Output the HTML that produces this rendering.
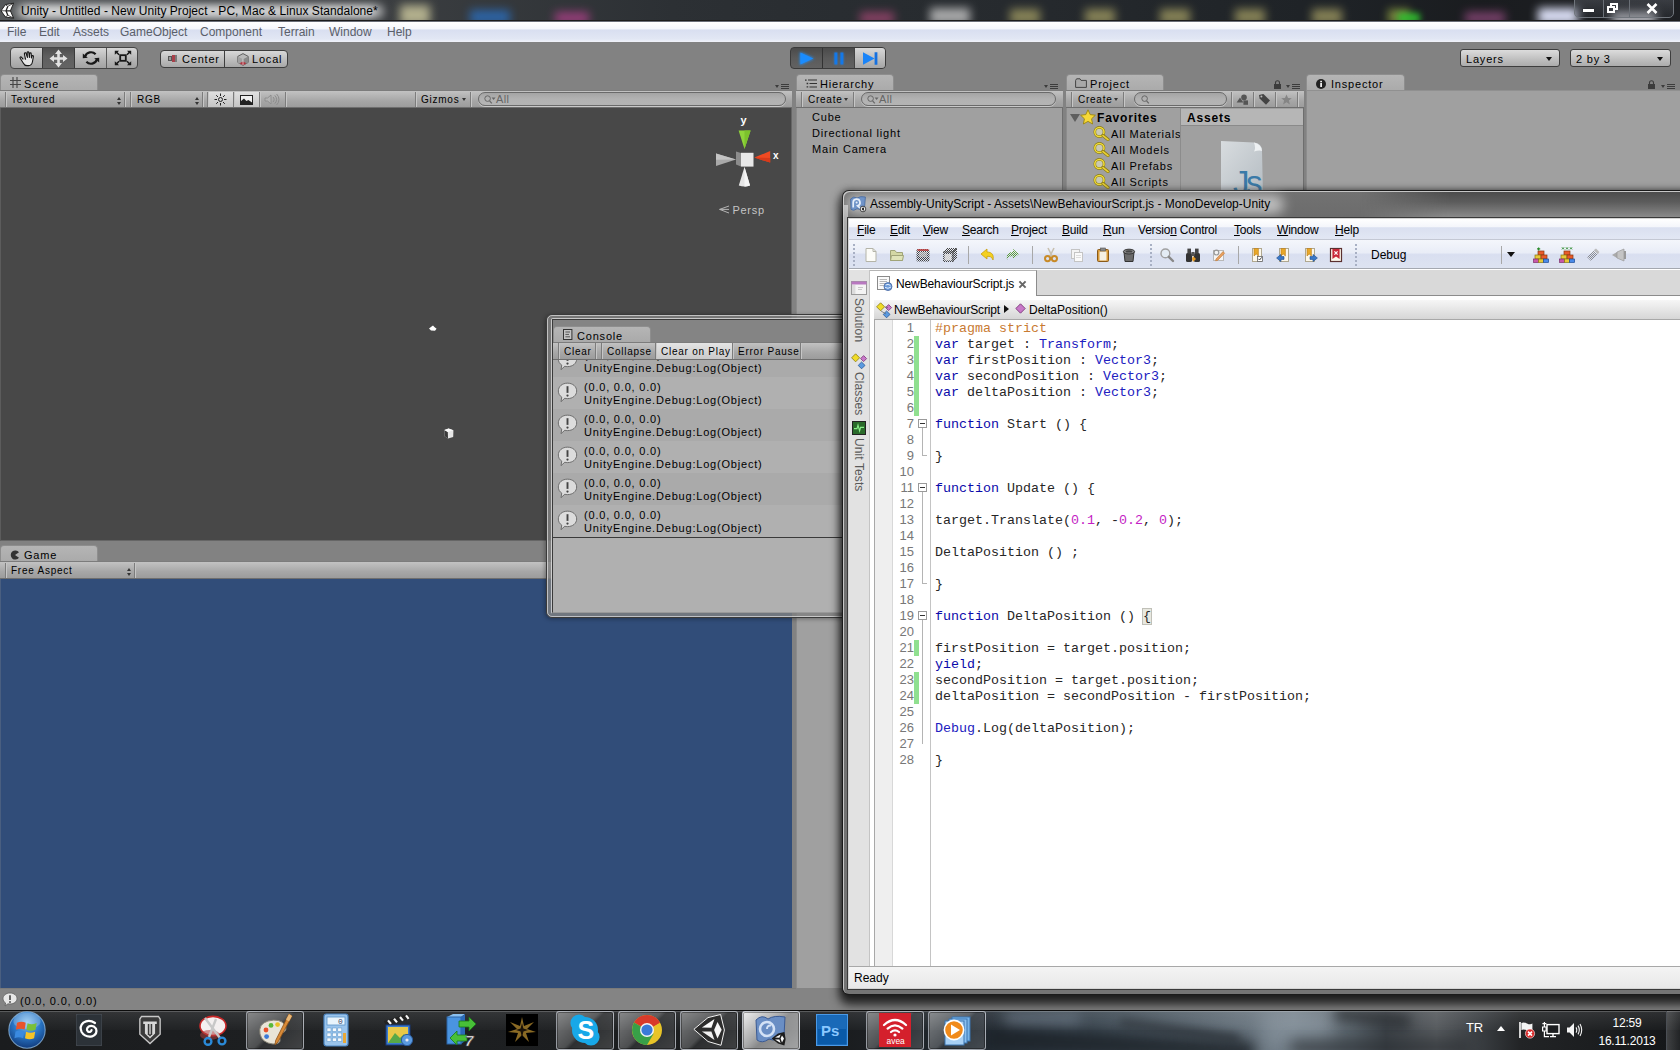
<!DOCTYPE html>
<html>
<head>
<meta charset="utf-8">
<title>Unity</title>
<style>
*{box-sizing:border-box;margin:0;padding:0}
html,body{width:1680px;height:1050px;overflow:hidden;background:#828282;font-family:"Liberation Sans",sans-serif}
#root{position:absolute;left:0;top:0;width:1680px;height:1050px;overflow:hidden;background:#828282}
.a{position:absolute}
.u{font:11px "Liberation Sans",sans-serif;letter-spacing:.8px;color:#000;white-space:pre;line-height:14px}
.ub{font:bold 12px "Liberation Sans",sans-serif;letter-spacing:.8px;color:#000;white-space:pre;line-height:14px}
.s{font:12px "Liberation Sans",sans-serif;color:#000;white-space:pre;line-height:14px}
.m{font:13.33px "Liberation Mono",monospace;color:#262626;white-space:pre;line-height:16px}
/* Unity title + menu */
#utitle{left:0;top:0;width:1680px;height:22px;background:#2b2d30;overflow:hidden}
#umenu{left:0;top:22px;width:1680px;height:20px;background:linear-gradient(#fff 0,#f5f7fc 34%,#d9dff0 40%,#e2e7f4 85%,#f0f2f9 100%)}
#umenu span{position:absolute;top:3px;color:#5a5f6a}
/* Unity panels */
.tab{background:linear-gradient(#b5b5b5,#a9a9a9);border:1px solid #8e8e8e;border-bottom:none;border-radius:4px 4px 0 0;height:17px}
.tbar{background:linear-gradient(#c2c2c2,#a7a7a7 60%,#9c9c9c);border-top:1px solid #8a8a8a;border-bottom:1px solid #6e6e6e;height:17px}
.pane{background:#a0a0a0}

.btn{background:linear-gradient(#d4d4d4,#b4b4b4 55%,#a4a4a4);border:1px solid #4a4a4a}
.btnon{background:linear-gradient(#555,#6a6a6a);border:1px solid #3c3c3c}
.sep{position:absolute;top:0;width:1px;height:15px;background:#7c7c7c;box-shadow:1px 0 0 #c6c6c6}
.t10{font:10px "Liberation Sans",sans-serif;letter-spacing:.75px;color:#000;white-space:pre;line-height:12px}
.ctx{position:absolute;width:14px;height:7px}

.ctxm{position:absolute;width:14px;height:6px}
.ctxm:before{content:"";position:absolute;left:0;top:1px;border:2.5px solid transparent;border-top:3.5px solid #3c3c3c}
.ctxm:after{content:"";position:absolute;left:6px;top:0;width:8px;height:1px;background:#3c3c3c;box-shadow:0 2px 0 #3c3c3c,0 4px 0 #3c3c3c}
.dd:after{content:"";position:absolute;right:3px;top:3px;border:2.5px solid transparent;border-bottom:3px solid #333}
.dd:before{content:"";position:absolute;right:3px;top:10px;border:2.5px solid transparent;border-top:3px solid #333}
.srch{position:absolute;height:14px;border-radius:7px;border:1px solid #6a6a6a;background:linear-gradient(#a4a4a4,#b2b2b2 50%,#b4b4b4);box-shadow:0 1px 0 #c8c8c8}

#mono .mi{position:absolute;top:4px;letter-spacing:-.2px}
#mono .mi u{text-decoration:underline}
.ln{position:absolute;left:893px;width:21px;text-align:right;font:13px "Liberation Sans",sans-serif;color:#777;line-height:16px;white-space:pre}
.kw{color:#0a0aaa}.ty{color:#2020c0}.pp{color:#c87a32}.nm{color:#c41ec4}
.fold{position:absolute;left:918px;width:9px;height:9px;border:1px solid #9a9a9a;background:#fff}
.fold:after{content:"";position:absolute;left:1px;top:3px;width:5px;height:1px;background:#333}
.gb{position:absolute;left:914px;width:5px;background:#90e090}
.ti{position:absolute;top:247px}

.tbtn{position:absolute;top:1px;width:58px;height:39px;border-radius:3px;border:1px solid rgba(210,215,225,.6);background:linear-gradient(135deg,rgba(255,255,255,.42) 0,rgba(255,255,255,.22) 46%,rgba(255,255,255,.08) 52%,rgba(255,255,255,.16) 100%);box-shadow:inset 0 0 0 1px rgba(0,0,0,.35)}
.tico{position:absolute;top:4px}
.tb2>*{margin-top:1px}
.tbar{border-top-color:#7c7c7c}
.tab.sh>*{margin-top:1px}
</style>
</head>
<body>
<div id="root">

<!-- ===== Unity title bar ===== -->
<div id="utitle" class="a">
<div class="a" style="left:0;top:0;width:1680px;height:22px;background:linear-gradient(90deg,#55585a 0,#4a4d50 4%,#3a3d40 24%,#2c3034 40%,#262a2e 60%,#1e2226 80%,#1a1c1f 88%,#1e2024 100%)"></div>
<!-- blurry wallpaper blobs -->
<div class="a" style="left:400px;top:5px;width:30px;height:20px;background:#d0cca0;filter:blur(5px);opacity:.8"></div>
<div class="a" style="left:470px;top:10px;width:40px;height:14px;background:#2a6fc0;filter:blur(5px);opacity:.8"></div>
<div class="a" style="left:555px;top:12px;width:34px;height:12px;background:#b0408a;filter:blur(5px);opacity:.8"></div>
<div class="a" style="left:860px;top:12px;width:34px;height:12px;background:#b04a7a;filter:blur(5px);opacity:.7"></div>
<div class="a" style="left:930px;top:8px;width:40px;height:16px;background:#c8c8c8;filter:blur(5px);opacity:.8"></div>
<div class="a" style="left:1010px;top:9px;width:30px;height:15px;background:#a09a62;filter:blur(5px);opacity:.8"></div>
<div class="a" style="left:1085px;top:9px;width:30px;height:15px;background:#a09a62;filter:blur(5px);opacity:.8"></div>
<div class="a" style="left:1160px;top:9px;width:30px;height:15px;background:#a09a62;filter:blur(5px);opacity:.8"></div>
<div class="a" style="left:1235px;top:9px;width:30px;height:15px;background:#a09a62;filter:blur(5px);opacity:.8"></div>
<div class="a" style="left:1312px;top:9px;width:30px;height:15px;background:#a09a62;filter:blur(5px);opacity:.8"></div>
<div class="a" style="left:1388px;top:9px;width:22px;height:15px;background:#8a9a42;filter:blur(4px);opacity:.8"></div>
<div class="a" style="left:1398px;top:13px;width:22px;height:10px;background:#2fc02f;filter:blur(3px);opacity:.9"></div>
<div class="a" style="left:1465px;top:12px;width:40px;height:12px;background:#a0508a;filter:blur(5px);opacity:.7"></div>
<div class="a" style="left:1538px;top:8px;width:40px;height:16px;background:#e4e8ff;filter:blur(5px);opacity:.95"></div>
<div class="a" style="left:1612px;top:12px;width:44px;height:12px;background:#e8e8f0;filter:blur(5px);opacity:.8"></div>
<!-- white glow behind title -->
<div class="a" style="left:16px;top:4px;width:368px;height:15px;background:#fff;filter:blur(4px);opacity:.55;border-radius:8px"></div>
<div class="a" style="left:24px;top:6px;width:350px;height:11px;background:#fff;filter:blur(3px);opacity:.45;border-radius:6px"></div>
<!-- unity logo -->
<svg class="a" style="left:0px;top:2px" width="17" height="17" viewBox="0 0 17 17"><path d="M1 8.8 L5.4 2.6 L13.6 1.2 L10.4 8.8 L13.6 16.2 L5.4 15 Z" fill="#fff" stroke="#222" stroke-width="1"/><path d="M6 8.8 L10.4 8.8 M6 8.8 L7.8 4.4 M6 8.8 L7.8 13.2" stroke="#222" stroke-width="1.3" fill="none"/><path d="M5.4 2.6 L7.8 4.4 L13.6 1.2 M5.4 15 L7.8 13.2 L13.6 16.2 M1 8.8 H6" stroke="#222" stroke-width=".8" fill="none"/></svg>
<div class="a s" style="left:21px;top:4px;letter-spacing:.05px">Unity - Untitled - New Unity Project - PC, Mac &amp; Linux Standalone*</div>
<!-- caption buttons -->
<div class="a" style="left:1574px;top:-4px;width:100px;height:22px;border:1px solid #70757c;border-radius:0 0 5px 5px;background:linear-gradient(rgba(120,125,135,.35),rgba(60,65,72,.25))"></div>
<div class="a" style="left:1603px;top:0;width:1px;height:17px;background:#6a6f76"></div>
<div class="a" style="left:1629px;top:0;width:1px;height:17px;background:#6a6f76"></div>
<div class="a" style="left:1583px;top:9px;width:11px;height:3px;background:#fff;box-shadow:0 0 1px #000"></div>
<div class="a" style="left:1610px;top:3px;width:8px;height:7px;border:2px solid #fff;border-top-width:2px"></div>
<div class="a" style="left:1607px;top:6px;width:8px;height:7px;border:2px solid #fff;background:#3a3d42"></div>
<svg class="a" style="left:1646px;top:3px" width="12" height="11" viewBox="0 0 12 11"><path d="M1.5 1 L10.5 10 M10.5 1 L1.5 10" stroke="#fff" stroke-width="2.6"/></svg>
<div class="a" style="left:0;top:20px;width:1680px;height:1px;background:#1c1c1c"></div>
<div class="a" style="left:0;top:21px;width:1680px;height:1px;background:#6a6e78"></div>
</div>

<!-- ===== Unity menu ===== -->
<div id="umenu" class="a s"><span style="left:7px">File</span><span style="left:39px">Edit</span><span style="left:73px">Assets</span><span style="left:120px">GameObject</span><span style="left:200px">Component</span><span style="left:278px">Terrain</span><span style="left:329px">Window</span><span style="left:387px">Help</span></div>

<!-- ===== Unity toolbar ===== -->
<div id="utool" class="a" style="left:0;top:42px;width:1680px;height:33px">
<!-- transform tools -->
<div class="a" style="left:10px;top:5px;width:128px;height:22px;border-radius:4px;border:1px solid #454545;background:linear-gradient(#d6d6d6,#b6b6b6 55%,#a2a2a2);overflow:hidden">
 <div class="a" style="left:31px;top:0;width:33px;height:20px;background:linear-gradient(#4e4e4e,#5e5e5e 40%,#646464);border-left:1px solid #3a3a3a;border-right:1px solid #3a3a3a"></div>
 <div class="a" style="left:95px;top:0;width:1px;height:20px;background:#5a5a5a"></div>
 <!-- hand -->
 <svg class="a" style="left:7px;top:2px" width="18" height="17" viewBox="0 0 18 17"><path d="M5.2 9.4 L3.4 7.2 C2.6 6.4 1.6 7.3 2.2 8.2 L5.4 13.2 C6 14.6 7.4 15.6 9 15.6 L10.6 15.6 C12.8 15.6 14 14 14.4 12 L15.4 6.6 C15.6 5.4 14 5.2 13.8 6.4 L13.4 8 L13.2 3.8 C13.2 2.6 11.6 2.6 11.6 3.8 L11.4 7.4 L10.8 2.6 C10.6 1.4 9 1.6 9.2 2.8 L9.4 7.4 L8 3.4 C7.6 2.2 6.2 2.8 6.4 4 L7.6 9.6" fill="#e6e6e6" stroke="#151515" stroke-width="1.1" stroke-linejoin="round"/></svg>
 <!-- move -->
 <svg class="a" style="left:38px;top:1px" width="19" height="19" viewBox="0 0 19 19"><path d="M9.5 0.5 L13 5 L10.8 5 L10.8 8.2 L14 8.2 L14 6 L18.5 9.5 L14 13 L14 10.8 L10.8 10.8 L10.8 14 L13 14 L9.5 18.5 L6 14 L8.2 14 L8.2 10.8 L5 10.8 L5 13 L0.5 9.5 L5 6 L5 8.2 L8.2 8.2 L8.2 5 L6 5 Z" fill="#e2e2e2"/></svg>
 <!-- rotate -->
 <svg class="a" style="left:71px;top:2px" width="18" height="16" viewBox="0 0 18 16"><path d="M3.2 6.4 A6 5.4 0 0 1 13.6 4.2" fill="none" stroke="#181818" stroke-width="2.2"/><path d="M14.8 9.6 A6 5.4 0 0 1 4.4 11.8" fill="none" stroke="#181818" stroke-width="2.2"/><path d="M0.8 3.4 L5.8 7.8 L0.8 8.2 Z M17.2 12.6 L12.2 8.2 L17.2 7.8 Z" fill="#181818"/></svg>
 <!-- scale -->
 <svg class="a" style="left:103px;top:2px" width="18" height="16" viewBox="0 0 18 16"><rect x="6.2" y="5.2" width="5.6" height="5.6" fill="none" stroke="#181818" stroke-width="1.8"/><path d="M0.8 0.8 L5 0.8 L3.6 2.2 L5.6 4.2 L4.6 5.2 L2.4 3.2 L0.8 4.8 Z M17.2 0.8 L13 0.8 L14.4 2.2 L12.4 4.2 L13.4 5.2 L15.6 3.2 L17.2 4.8 Z M0.8 15.2 L5 15.2 L3.6 13.8 L5.6 11.8 L4.6 10.8 L2.4 12.8 L0.8 11.2 Z M17.2 15.2 L13 15.2 L14.4 13.8 L12.4 11.8 L13.4 10.8 L15.6 12.8 L17.2 11.2 Z" fill="#181818"/></svg>
</div>
<!-- center / local -->
<div class="a" style="left:160px;top:8px;width:128px;height:18px;border-radius:4px;border:1px solid #3e3e3e;background:linear-gradient(#d8d8d8,#bdbdbd 55%,#a8a8a8)">
 <div class="a" style="left:63px;top:0;width:1px;height:16px;background:#3e3e3e"></div>
 <div class="a" style="left:7px;top:5px;width:4px;height:5px;border:1px solid #555;background:#9a9a9a"></div>
 <div class="a" style="left:11px;top:4px;width:3px;height:7px;background:#a8404a"></div>
 <div class="a" style="left:14px;top:4px;width:2px;height:7px;background:#7a7a7a"></div>
 <div class="a u" style="left:21px;top:1px">Center</div>
 <svg class="a" style="left:76px;top:2px" width="12" height="13" viewBox="0 0 12 13"><path d="M6 0.6 L11.2 3.4 L11.2 9.4 L6 12.4 L0.8 9.4 L0.8 3.4 Z" fill="#b9b9b9" stroke="#555" stroke-width=".9"/><path d="M6 6.2 L11.2 3.4 L11.2 9.4 L6 12.4 Z" fill="#8a8a8a"/><path d="M6 6.2 L0.8 3.4 L0.8 9.4 L6 12.4 Z" fill="#a0a0a0"/><path d="M6 8.4 L9.4 10.2 L6 12.2 L2.6 10.2 Z" fill="#b0303c"/><path d="M6 6.2 L6 12" stroke="#eee" stroke-width=".7"/></svg>
 <div class="a u" style="left:91px;top:1px">Local</div>
</div>
<!-- play buttons -->
<div class="a" style="left:790px;top:5px;width:96px;height:22px;border-radius:4px;border:1px solid #3a3a3a;background:linear-gradient(#4a4a4a,#5a5a5a 50%,#626262);overflow:hidden">
 <div class="a" style="left:31px;top:0;width:1px;height:20px;background:#333"></div>
 <div class="a" style="left:63px;top:0;width:32px;height:20px;background:linear-gradient(#d8d8d8,#bcbcbc 55%,#a6a6a6);border-left:1px solid #444"></div>
 <svg class="a" style="left:6px;top:2px" width="20" height="17" viewBox="0 0 20 17"><defs><filter id="gl" x="-50%" y="-50%" width="200%" height="200%"><feGaussianBlur stdDeviation="1.6"/></filter></defs><path d="M3 2 L17 8.5 L3 15 Z" fill="#1e90ff" filter="url(#gl)"/><path d="M3.4 2.4 L16.4 8.5 L3.4 14.6 Z" fill="#1a8cff"/></svg>
 <svg class="a" style="left:38px;top:2px" width="20" height="17" viewBox="0 0 20 17"><path d="M5.6 2.4 H8 V14.6 H5.6 Z M11.8 2.4 H14.2 V14.6 H11.8 Z" fill="#1e90ff" opacity=".6" filter="url(#gl)"/><path d="M5.4 2.4 H8.4 V14.6 H5.4 Z M11.4 2.4 H14.4 V14.6 H11.4 Z" fill="#1478e8"/></svg>
 <svg class="a" style="left:69px;top:2px" width="22" height="17" viewBox="0 0 22 17"><path d="M3 2.2 L14.6 8.5 L3 14.8 Z" fill="#1a84f8"/><path d="M14.6 2.2 H17.4 V14.8 H14.6 Z" fill="#1470e0"/></svg>
</div>
<!-- layers / layout -->
<div class="a" style="left:1460px;top:7px;width:100px;height:18px;border-radius:3px;border:1px solid #3e3e3e;background:linear-gradient(#dcdcdc,#bebebe 60%,#acacac)"><div class="a u" style="left:5px;top:2px">Layers</div><div class="a" style="left:85px;top:7px;border:3px solid transparent;border-top:4px solid #111;width:0;height:0"></div></div>
<div class="a" style="left:1570px;top:7px;width:101px;height:18px;border-radius:3px;border:1px solid #3e3e3e;background:linear-gradient(#dcdcdc,#bebebe 60%,#acacac)"><div class="a u" style="left:5px;top:2px">2 by 3</div><div class="a" style="left:86px;top:7px;border:3px solid transparent;border-top:4px solid #111;width:0;height:0"></div></div>
</div>

<!-- ===== Scene ===== -->
<div id="scene" class="a" style="left:0;top:75px;width:796px;height:471px">
<div class="a tab sh" style="left:0;top:-1px;height:18px;padding-top:1px;width:98px"><svg class="a" style="left:9px;top:1px" width="11" height="11" viewBox="0 0 11 11"><path d="M3 0 V11 M7 0 V11 M0 3.5 H11 M0 7.5 H11" stroke="#444" stroke-width="1.1"/></svg><div class="a u" style="left:23px;top:1px">Scene</div></div>
<div class="ctxm" style="left:775px;top:9px"></div>
<div class="a tbar tb2" style="left:0;top:15px;height:18px;width:792px">
 <div class="sep" style="left:5px"></div>
 <div class="a t10 dd" style="left:7px;top:0;width:117px;height:15px;padding:2px 0 0 4px">Textured</div>
 <div class="sep" style="left:124px"></div><div class="sep" style="left:130px"></div>
 <div class="a t10 dd" style="left:132px;top:0;width:70px;height:15px;padding:2px 0 0 5px">RGB</div>
 <div class="sep" style="left:202px"></div>
 <div class="a" style="left:208px;top:0;width:52px;height:15px;background:linear-gradient(#e0e0e0,#c4c4c4)"></div>
 <div class="sep" style="left:207px"></div><div class="sep" style="left:233px"></div><div class="sep" style="left:259px"></div><div class="sep" style="left:285px"></div>
 <svg class="a" style="left:214px;top:1px" width="13" height="13" viewBox="0 0 13 13"><circle cx="6.5" cy="6.5" r="2" fill="none" stroke="#222" stroke-width="1"/><path d="M6.5 0.5 V3 M6.5 10 V12.5 M0.5 6.5 H3 M10 6.5 H12.5 M2.2 2.2 L4 4 M9 9 L10.8 10.8 M2.2 10.8 L4 9 M9 4 L10.8 2.2" stroke="#222" stroke-width="1"/></svg>
 <svg class="a" style="left:240px;top:3px" width="13" height="10" viewBox="0 0 13 10"><rect x=".5" y=".5" width="12" height="9" fill="#f0f0f0" stroke="#222"/><path d="M1 9 L1 6 L4 3.4 L6.4 6 L8.4 5 L12 7.6 L12 9 Z" fill="#222"/></svg>
 <svg class="a" style="left:264px;top:1px" width="16" height="13" viewBox="0 0 16 13"><path d="M1 5 H3.6 L7 2 V11 L3.6 8 H1 Z" fill="#b4b4b4" stroke="#8c8c8c" stroke-width=".9"/><path d="M9 4 A3.4 3.4 0 0 1 9 9 M10.8 2.4 A5.6 5.6 0 0 1 10.8 10.6 M12.6 1 A7.6 7.6 0 0 1 12.6 12" fill="none" stroke="#8c8c8c" stroke-width="1"/></svg>
 <div class="sep" style="left:415px"></div>
 <div class="a t10" style="left:421px;top:2px">Gizmos</div>
 <div class="a" style="left:462px;top:6px;border:2.5px solid transparent;border-top:3px solid #333"></div>
 <div class="sep" style="left:470px"></div>
 <div class="srch" style="left:478px;top:0;width:308px"><svg class="a" style="left:5px;top:2px" width="12" height="9" viewBox="0 0 12 9"><circle cx="3.6" cy="3.6" r="2.8" fill="none" stroke="#666" stroke-width="1"/><path d="M5.6 5.8 L7.8 8.4" stroke="#666" stroke-width="1.2"/><path d="M7.6 2.6 H11.6 L9.6 5 Z" fill="#666"/></svg><div class="a t10" style="left:17px;top:0;color:#666;font-size:11px;letter-spacing:.3px">All</div></div>
</div>
<div class="a" style="left:0;top:33px;width:792px;height:433px;background:#484848;border-left:1px solid #5c5c5c;border-right:1px solid #666;border-bottom:1px solid #666"></div>
<!-- scene objects -->
<svg class="a" style="left:428px;top:250px" width="10" height="7" viewBox="0 0 10 7"><path d="M1 3.4 L3.6 1.6 L5 0.6 L6.4 2 L8.6 3.8 L7 5.8 L3 5.6 Z" fill="#fff"/></svg>
<svg class="a" style="left:444px;top:353px" width="10" height="11" viewBox="0 0 10 11"><path d="M0.4 2 L4.6 0.4 L9.4 2.2 L9.2 9 L4 10.6 L0.6 8.2 Z" fill="#e6e6e6"/><path d="M0.4 2 L3.8 4 L4 10.6 L0.6 8.2 Z" fill="#3a3a3a"/><path d="M0.4 2 L4.6 0.4 L9.4 2.2 L3.8 4 Z" fill="#fafafa"/></svg>
<!-- gizmo -->
<svg class="a" style="left:712px;top:40px" width="72" height="104" viewBox="0 0 72 104">
 <text x="28.5" y="9.4" font-family="Liberation Sans" font-weight="bold" font-size="11" fill="#fff">y</text>
 <path d="M26.6 15.5 L38.6 15.5 L32.5 34 Z" fill="#8fd43a"/><path d="M32.5 15.5 L38.6 15.5 L32.5 34 Z" fill="#7cc22c"/>
 <path d="M4 38.6 L24 44.4 L4 51 Z" fill="#a8a8a8"/><path d="M4 38.6 L24 44.4 L4 44.8 Z" fill="#c4c4c4"/>
 <path d="M58.2 36 L42.4 42.6 L58.2 47.6 Z" fill="#f04a22"/><path d="M58.2 43 L42.4 42.6 L58.2 47.6 Z" fill="#d83a1a"/>
 <path d="M24 36.6 L29 38 L29 51.6 L24 49.6 Z" fill="#8c8c8c"/><rect x="29" y="37.8" width="12.5" height="13.8" fill="#e8e8e8"/>
 <path d="M32.5 52 L38 70.6 Q32.5 72.6 26.8 70.6 Z" fill="#e6e6e6"/><path d="M32.5 52 L38 70.6 Q35 71.6 32.5 71.8 Z" fill="#f6f6f6"/>
 <text x="61" y="44" font-family="Liberation Sans" font-weight="bold" font-size="10" fill="#fff">x</text>
 <path d="M17 91 L7.6 94.4 L17 98 M17 94.4 L7.6 94.4" fill="none" stroke="#b4b4b4" stroke-width="1"/>
 <text x="20.5" y="98.6" font-family="Liberation Sans" font-size="11" letter-spacing=".7" fill="#c4c4c4">Persp</text>
</svg>
</div>

<!-- ===== Game ===== -->
<div id="game" class="a" style="left:0;top:546px;width:796px;height:444px">
<div class="a tab sh" style="left:0;top:-1px;height:18px;padding-top:1px;width:98px"><svg class="a" style="left:9px;top:3px" width="10" height="10" viewBox="0 0 10 10"><path d="M5 5 L9 2.2 A4.6 4.6 0 1 0 9 7.8 Z" fill="#333"/></svg><div class="a u" style="left:23px;top:1px">Game</div></div>
<div class="a tbar tb2" style="left:0;top:15px;height:18px;width:792px">
 <div class="sep" style="left:5px"></div>
 <div class="a t10 dd" style="left:7px;top:0;width:127px;height:15px;padding:2px 0 0 4px">Free Aspect</div>
 <div class="sep" style="left:134px"></div>
</div>
<div class="a" style="left:0;top:33px;width:792px;height:409px;background:#314d79;border-left:1px solid #4a5f80"></div>
</div>

<!-- ===== Hierarchy ===== -->
<div id="hier" class="a" style="left:796px;top:75px;width:267px;height:915px">
<div class="a tab sh" style="left:0;top:-1px;height:18px;padding-top:1px;width:98px"><svg class="a" style="left:8px;top:3px" width="12" height="9" viewBox="0 0 12 9"><path d="M3 1 H12 M4.5 4.5 H12 M4.5 8 H12" stroke="#333" stroke-width="1.1"/><path d="M0 0.4 H1.6 V1.8 H0 Z M1.6 3.8 H3.2 V5.2 H1.6 Z M1.6 7.2 H3.2 V8.6 H1.6 Z" fill="#333"/></svg><div class="a u" style="left:23px;top:1px">Hierarchy</div></div>
<div class="ctxm" style="left:248px;top:9px"></div>
<div class="a pane" style="left:0;top:16px;width:267px;height:897px;border-left:1px solid #8c8c8c;border-right:1px solid #6e6e6e"></div>
<div class="a tbar tb2" style="left:0;top:15px;height:18px;width:267px">
 <div class="sep" style="left:5px"></div>
 <div class="a t10" style="left:12px;top:2px">Create</div>
 <div class="a" style="left:48px;top:6px;border:2.5px solid transparent;border-top:3px solid #333"></div>
 <div class="sep" style="left:57px"></div>
 <div class="srch" style="left:65px;top:0;width:195px"><svg class="a" style="left:5px;top:2px" width="12" height="9" viewBox="0 0 12 9"><circle cx="3.6" cy="3.6" r="2.8" fill="none" stroke="#666" stroke-width="1"/><path d="M5.6 5.8 L7.8 8.4" stroke="#666" stroke-width="1.2"/><path d="M7.6 2.6 H11.6 L9.6 5 Z" fill="#666"/></svg><div class="a t10" style="left:17px;top:0;color:#666;font-size:11px;letter-spacing:.3px">All</div></div>
</div>
<div class="a u" style="left:16px;top:34px;line-height:16px">Cube
Directional light
Main Camera</div>
</div>

<!-- ===== Project ===== -->
<div id="proj" class="a" style="left:1066px;top:75px;width:238px;height:915px">
<div class="a tab sh" style="left:0;top:-1px;height:18px;padding-top:1px;width:98px"><svg class="a" style="left:8px;top:2px" width="12" height="10" viewBox="0 0 12 10"><path d="M0.6 2.4 L1.6 0.8 H5 L6 2.4 H11.4 V9.4 H0.6 Z" fill="#a8a8a8" stroke="#444" stroke-width="1"/></svg><div class="a u" style="left:23px;top:1px">Project</div></div>
<svg class="a" style="left:207px;top:4px" width="9" height="11" viewBox="0 0 9 11"><path d="M2.5 5.4 V3.8 A2 2 0 0 1 6.5 3.8 V5.4" fill="none" stroke="#3c3c3c" stroke-width="1.1"/><rect x="1" y="5" width="7" height="5" fill="#3c3c3c"/></svg>
<div class="ctxm" style="left:220px;top:9px"></div>
<div class="a pane" style="left:0;top:16px;width:238px;height:897px;border-left:1px solid #8c8c8c;border-right:1px solid #6e6e6e"></div>
<div class="a tbar tb2" style="left:0;top:15px;height:18px;width:238px">
 <div class="sep" style="left:5px"></div>
 <div class="a t10" style="left:12px;top:2px">Create</div>
 <div class="a" style="left:48px;top:6px;border:2.5px solid transparent;border-top:3px solid #333"></div>
 <div class="sep" style="left:57px"></div>
 <div class="srch" style="left:68px;top:0;width:93px"><svg class="a" style="left:6px;top:2px" width="9" height="9" viewBox="0 0 9 9"><circle cx="3.6" cy="3.6" r="2.8" fill="none" stroke="#666" stroke-width="1"/><path d="M5.6 5.8 L7.8 8.4" stroke="#666" stroke-width="1.2"/></svg></div>
 <div class="sep" style="left:165px"></div><div class="sep" style="left:187px"></div><div class="sep" style="left:209px"></div><div class="sep" style="left:231px"></div>
 <svg class="a" style="left:170px;top:2px" width="13" height="11" viewBox="0 0 13 11"><circle cx="8" cy="3.4" r="2.8" fill="#555"/><path d="M0.6 8.6 L4 3.6 L7.4 8.6 Z" fill="#555"/><rect x="7.4" y="6.4" width="4.6" height="4.4" fill="#555"/></svg>
 <svg class="a" style="left:192px;top:1px" width="13" height="13" viewBox="0 0 13 13"><path d="M1 2 L5.4 1 L12 7.6 L8 11.8 L1.6 5.6 Z" fill="#444"/><circle cx="3.4" cy="3.4" r="1" fill="#bbb"/></svg>
 <svg class="a" style="left:215px;top:2px" width="11" height="11" viewBox="0 0 11 11"><path d="M5.5 0.4 L7 4 L10.8 4.2 L7.9 6.6 L8.9 10.4 L5.5 8.2 L2.1 10.4 L3.1 6.6 L0.2 4.2 L4 4 Z" fill="#858585"/></svg>
</div>
<!-- tree -->
<div class="a" style="left:114px;top:33px;width:1px;height:882px;background:#8c8c8c"></div>
<div class="a" style="left:115px;top:34px;width:122px;height:17px;background:#b6b6b6;border-bottom:1px solid #8a8a8a"></div>
<div class="a" style="left:4px;top:39px;border:5px solid transparent;border-top:8px solid #5e5e5e;border-bottom:0"></div>
<svg class="a" style="left:14px;top:34px" width="16" height="16" viewBox="0 0 16 16"><path d="M8 0.8 L10.2 5.6 L15.4 6.2 L11.6 9.8 L12.6 15 L8 12.4 L3.4 15 L4.4 9.8 L0.6 6.2 L5.8 5.6 Z" fill="#f6d838" stroke="#9a8410" stroke-width=".9"/></svg>
<div class="a ub" style="left:31px;top:36px">Favorites</div>
<div class="a ub" style="left:121px;top:36px">Assets</div>
<svg class="a" style="left:27px;top:51px" width="17" height="15" viewBox="0 0 17 15"><circle cx="6.4" cy="6" r="4.6" fill="#c9c9b4" stroke="#8a7a10" stroke-width="2.6"/><circle cx="6.4" cy="6" r="4.6" fill="none" stroke="#f0dc3c" stroke-width="1.5"/><path d="M10 9.6 L15 13.6" stroke="#8a7a10" stroke-width="3.2" stroke-linecap="round"/><path d="M10 9.6 L15 13.6" stroke="#e8d038" stroke-width="1.8" stroke-linecap="round"/></svg><svg class="a" style="left:27px;top:67px" width="17" height="15" viewBox="0 0 17 15"><circle cx="6.4" cy="6" r="4.6" fill="#c9c9b4" stroke="#8a7a10" stroke-width="2.6"/><circle cx="6.4" cy="6" r="4.6" fill="none" stroke="#f0dc3c" stroke-width="1.5"/><path d="M10 9.6 L15 13.6" stroke="#8a7a10" stroke-width="3.2" stroke-linecap="round"/><path d="M10 9.6 L15 13.6" stroke="#e8d038" stroke-width="1.8" stroke-linecap="round"/></svg><svg class="a" style="left:27px;top:83px" width="17" height="15" viewBox="0 0 17 15"><circle cx="6.4" cy="6" r="4.6" fill="#c9c9b4" stroke="#8a7a10" stroke-width="2.6"/><circle cx="6.4" cy="6" r="4.6" fill="none" stroke="#f0dc3c" stroke-width="1.5"/><path d="M10 9.6 L15 13.6" stroke="#8a7a10" stroke-width="3.2" stroke-linecap="round"/><path d="M10 9.6 L15 13.6" stroke="#e8d038" stroke-width="1.8" stroke-linecap="round"/></svg><svg class="a" style="left:27px;top:99px" width="17" height="15" viewBox="0 0 17 15"><circle cx="6.4" cy="6" r="4.6" fill="#c9c9b4" stroke="#8a7a10" stroke-width="2.6"/><circle cx="6.4" cy="6" r="4.6" fill="none" stroke="#f0dc3c" stroke-width="1.5"/><path d="M10 9.6 L15 13.6" stroke="#8a7a10" stroke-width="3.2" stroke-linecap="round"/><path d="M10 9.6 L15 13.6" stroke="#e8d038" stroke-width="1.8" stroke-linecap="round"/></svg>
<div class="a u" style="left:45px;top:51px;line-height:16px;width:69px;overflow:hidden">All Materials
All Models
All Prefabs
All Scripts</div>
<!-- js file icon -->
<svg class="a" style="left:154px;top:64px" width="46" height="56" viewBox="0 0 46 56"><defs><linearGradient id="pg" x1="0" y1="0" x2="1" y2="1"><stop offset="0" stop-color="#d8dcdf"/><stop offset="1" stop-color="#b4bcc2"/></linearGradient></defs><path d="M1 2 L34 3.4 Q42 4 42 12 L43 56 L1 56 Z" fill="url(#pg)"/><path d="M34 3.4 Q36 9 34 12.6 Q39 11 42 12 Q41.6 5 34 3.4 Z" fill="#eef1f3"/><text x="13" y="55" font-family="Liberation Sans" font-size="33" fill="#3a7aa8" letter-spacing="-3.5">Js</text></svg>
</div>

<!-- ===== Inspector ===== -->
<div id="insp" class="a" style="left:1306px;top:75px;width:374px;height:915px">
<div class="a tab sh" style="left:0;top:-1px;height:18px;padding-top:1px;width:99px"><svg class="a" style="left:9px;top:3px" width="10" height="10" viewBox="0 0 10 10"><circle cx="5" cy="5" r="5" fill="#222"/><rect x="4.2" y="4" width="1.8" height="4" fill="#eee"/><rect x="4.2" y="1.8" width="1.8" height="1.5" fill="#eee"/></svg><div class="a u" style="left:24px;top:1px">Inspector</div></div>
<svg class="a" style="left:341px;top:4px" width="9" height="11" viewBox="0 0 9 11"><path d="M2.5 5.4 V3.8 A2 2 0 0 1 6.5 3.8 V5.4" fill="none" stroke="#3c3c3c" stroke-width="1.1"/><rect x="1" y="5" width="7" height="5" fill="#3c3c3c"/></svg>
<div class="ctxm" style="left:355px;top:9px"></div>
<div class="a pane" style="left:0;top:15px;width:374px;height:898px;border-left:1px solid #8c8c8c;border-top:1px solid #909090"></div>
</div>

<!-- ===== Unity status ===== -->
<div id="ustatus" class="a" style="left:0;top:988px;width:1680px;height:22px;background:#848484">
<div class="a" style="left:0;top:0;width:796px;height:1px;background:#7a7a7a"></div>
<svg class="a" style="left:2px;top:4px" width="16" height="15" viewBox="0 0 16 15"><path d="M8 1 C12 1 15 3.4 15 6.6 C15 9.8 12 12 8 12 C7.2 12 6.6 12 6 11.8 L3 14 L3.6 11 C1.8 10 1 8.4 1 6.6 C1 3.4 4 1 8 1 Z" fill="#e8e8e8" stroke="#666" stroke-width=".9"/><path d="M8 3.2 V8" stroke="#555" stroke-width="1.8"/><circle cx="8" cy="10" r="1" fill="#555"/></svg>
<div class="a u" style="left:20px;top:6px">(0.0, 0.0, 0.0)</div>
</div>

<!-- ===== Console window ===== -->
<div id="console" class="a" style="left:546px;top:314px;width:311px;height:304px;border:1px solid #3a3a3a;border-radius:6px 0 0 6px;background:rgba(128,128,128,.82);box-shadow:-1px 1px 4px rgba(0,0,0,.35)">
<div class="a" style="left:0;top:0;width:311px;height:302px;border:1px solid rgba(255,255,255,.55);border-radius:5px 0 0 5px"></div>
<div class="a" style="left:4px;top:3px;width:310px;height:296px;border:1px solid rgba(255,255,255,.6);border-bottom-color:transparent;border-radius:2px"></div>
<div class="a" style="left:5px;top:4px;width:310px;height:294px;border:1px solid #3a3a3a;border-bottom-color:#9a9a9a;background:#848484"></div>
<div class="a" style="left:6px;top:5px;width:300px;height:292px;overflow:hidden">
 <div class="a tab" style="left:0;top:6px;width:98px;height:17px"><svg class="a" style="left:9px;top:2px" width="10" height="11" viewBox="0 0 10 11"><rect x=".5" y=".5" width="8.4" height="10" fill="#c4c4c4" stroke="#333"/><path d="M2.4 3 H7 M2.4 5.4 H6 M2.4 7.8 H7" stroke="#555" stroke-width="1"/></svg><div class="a u" style="left:23px;top:2px">Console</div></div>
 <div class="a tbar" style="left:0;top:22px;width:300px;height:18px">
  <div class="a" style="left:102px;top:0;width:78px;height:16px;background:linear-gradient(#e4e4e4,#cacaca)"></div>
  <div class="sep" style="left:5px;height:16px"></div><div class="sep" style="left:42px;height:16px"></div><div class="sep" style="left:48px;height:16px"></div><div class="sep" style="left:102px;height:16px"></div><div class="sep" style="left:179px;height:16px"></div><div class="sep" style="left:247px;height:16px"></div>
  <div class="a t10" style="left:11px;top:3px">Clear</div>
  <div class="a t10" style="left:54px;top:3px">Collapse</div>
  <div class="a t10" style="left:108px;top:3px">Clear on Play</div>
  <div class="a t10" style="left:185px;top:3px">Error Pause</div>
 </div>
 <div class="a" style="left:0;top:40px;width:300px;height:177px;overflow:hidden;background:#aaaaaa">
<div class="a" style="left:0;top:-15px;width:300px;height:32px;background:#aaaaaa"><svg class="a" style="left:4px;top:5px" width="21" height="21" viewBox="0 0 22 22"><path d="M11 1.2 C16.6 1.2 20.6 4.8 20.6 9.4 C20.6 14 16.6 17.4 11 17.4 C10 17.4 9 17.3 8.2 17 L4.2 20.6 L5 15.8 C2.6 14.4 1.4 12 1.4 9.4 C1.4 4.8 5.4 1.2 11 1.2 Z" fill="#dcdcdc" stroke="#6a6a6a" stroke-width="1"/><path d="M11 4.4 V11.4" stroke="#444" stroke-width="2"/><circle cx="11" cy="14.2" r="1.2" fill="#444"/></svg><div class="a u" style="left:31px;top:4px;line-height:13px">(0.0, 0.0, 0.0)
UnityEngine.Debug:Log(Object)</div></div>
<div class="a" style="left:0;top:17px;width:300px;height:32px;background:#b0b0b0"><svg class="a" style="left:4px;top:5px" width="21" height="21" viewBox="0 0 22 22"><path d="M11 1.2 C16.6 1.2 20.6 4.8 20.6 9.4 C20.6 14 16.6 17.4 11 17.4 C10 17.4 9 17.3 8.2 17 L4.2 20.6 L5 15.8 C2.6 14.4 1.4 12 1.4 9.4 C1.4 4.8 5.4 1.2 11 1.2 Z" fill="#dcdcdc" stroke="#6a6a6a" stroke-width="1"/><path d="M11 4.4 V11.4" stroke="#444" stroke-width="2"/><circle cx="11" cy="14.2" r="1.2" fill="#444"/></svg><div class="a u" style="left:31px;top:4px;line-height:13px">(0.0, 0.0, 0.0)
UnityEngine.Debug:Log(Object)</div></div>
<div class="a" style="left:0;top:49px;width:300px;height:32px;background:#aaaaaa"><svg class="a" style="left:4px;top:5px" width="21" height="21" viewBox="0 0 22 22"><path d="M11 1.2 C16.6 1.2 20.6 4.8 20.6 9.4 C20.6 14 16.6 17.4 11 17.4 C10 17.4 9 17.3 8.2 17 L4.2 20.6 L5 15.8 C2.6 14.4 1.4 12 1.4 9.4 C1.4 4.8 5.4 1.2 11 1.2 Z" fill="#dcdcdc" stroke="#6a6a6a" stroke-width="1"/><path d="M11 4.4 V11.4" stroke="#444" stroke-width="2"/><circle cx="11" cy="14.2" r="1.2" fill="#444"/></svg><div class="a u" style="left:31px;top:4px;line-height:13px">(0.0, 0.0, 0.0)
UnityEngine.Debug:Log(Object)</div></div>
<div class="a" style="left:0;top:81px;width:300px;height:32px;background:#b0b0b0"><svg class="a" style="left:4px;top:5px" width="21" height="21" viewBox="0 0 22 22"><path d="M11 1.2 C16.6 1.2 20.6 4.8 20.6 9.4 C20.6 14 16.6 17.4 11 17.4 C10 17.4 9 17.3 8.2 17 L4.2 20.6 L5 15.8 C2.6 14.4 1.4 12 1.4 9.4 C1.4 4.8 5.4 1.2 11 1.2 Z" fill="#dcdcdc" stroke="#6a6a6a" stroke-width="1"/><path d="M11 4.4 V11.4" stroke="#444" stroke-width="2"/><circle cx="11" cy="14.2" r="1.2" fill="#444"/></svg><div class="a u" style="left:31px;top:4px;line-height:13px">(0.0, 0.0, 0.0)
UnityEngine.Debug:Log(Object)</div></div>
<div class="a" style="left:0;top:113px;width:300px;height:32px;background:#aaaaaa"><svg class="a" style="left:4px;top:5px" width="21" height="21" viewBox="0 0 22 22"><path d="M11 1.2 C16.6 1.2 20.6 4.8 20.6 9.4 C20.6 14 16.6 17.4 11 17.4 C10 17.4 9 17.3 8.2 17 L4.2 20.6 L5 15.8 C2.6 14.4 1.4 12 1.4 9.4 C1.4 4.8 5.4 1.2 11 1.2 Z" fill="#dcdcdc" stroke="#6a6a6a" stroke-width="1"/><path d="M11 4.4 V11.4" stroke="#444" stroke-width="2"/><circle cx="11" cy="14.2" r="1.2" fill="#444"/></svg><div class="a u" style="left:31px;top:4px;line-height:13px">(0.0, 0.0, 0.0)
UnityEngine.Debug:Log(Object)</div></div>
<div class="a" style="left:0;top:145px;width:300px;height:32px;background:#b0b0b0"><svg class="a" style="left:4px;top:5px" width="21" height="21" viewBox="0 0 22 22"><path d="M11 1.2 C16.6 1.2 20.6 4.8 20.6 9.4 C20.6 14 16.6 17.4 11 17.4 C10 17.4 9 17.3 8.2 17 L4.2 20.6 L5 15.8 C2.6 14.4 1.4 12 1.4 9.4 C1.4 4.8 5.4 1.2 11 1.2 Z" fill="#dcdcdc" stroke="#6a6a6a" stroke-width="1"/><path d="M11 4.4 V11.4" stroke="#444" stroke-width="2"/><circle cx="11" cy="14.2" r="1.2" fill="#444"/></svg><div class="a u" style="left:31px;top:4px;line-height:13px">(0.0, 0.0, 0.0)
UnityEngine.Debug:Log(Object)</div></div>
 </div>
 <div class="a" style="left:0;top:217px;width:300px;height:1px;background:#3a3a3a"></div>
 <div class="a" style="left:0;top:218px;width:300px;height:75px;background:#b0b0b0"></div>
</div>
</div>

<!-- ===== MonoDevelop ===== -->
<div id="mono" class="a" style="left:0;top:0;width:1680px;height:1050px;pointer-events:none">
<!-- shadow + frame -->
<div class="a" style="left:842px;top:190px;width:860px;height:805px;border-radius:7px;background:#1a1a1a;box-shadow:0 0 7px 0 rgba(0,0,0,.5),0 7px 10px 3px rgba(0,0,0,.7)"></div>
<div class="a" style="left:843px;top:191px;width:860px;height:803px;border-radius:6px;background:linear-gradient(#727272 0,#6c6c6c 26px,#707070 28px,#747474 100%);box-shadow:inset 1px 1px 0 rgba(255,255,255,.6)"></div>
<div class="a" style="left:1360px;top:192px;width:330px;height:25px;background:linear-gradient(#4c4c4c,#5c5c5c 40%,#8a8a8a);-webkit-mask-image:linear-gradient(90deg,transparent,#000 90px);mask-image:linear-gradient(90deg,transparent,#000 90px)"></div>
<div class="a" style="left:844px;top:205px;width:4px;height:160px;background:linear-gradient(#b4b4b4,#a0a0a0 50px,rgba(112,112,112,0))"></div>
<!-- title glow + text -->
<div class="a" style="left:846px;top:195px;width:438px;height:19px;border-radius:10px;background:#fff;filter:blur(6px);opacity:.55"></div>
<svg class="a" style="left:849px;top:195px" width="18" height="18" viewBox="0 0 18 18"><path d="M1.6 4 Q4.6 0.6 8 3 Q11.6 0.8 16.4 2 L15.6 12 Q11.6 15.6 8 13.8 Q4.6 16.4 2 14.4 Z" fill="#6f93c8" stroke="#46689c" stroke-width=".8"/><path d="M4.2 12.6 V7.6 A3.4 3.4 0 1 1 8.6 10.8 L11.6 13.4" fill="none" stroke="#e6eefa" stroke-width="1.7"/><circle cx="7.6" cy="7.4" r="1" fill="#e6eefa"/><circle cx="14" cy="14" r="2.8" fill="#fafafa" stroke="#222" stroke-width=".8"/><path d="M12.6 14 L13.8 12.6 L15.4 12.8 L14.8 14 L15.4 15.4 L13.8 15.4 Z" fill="#222"/></svg>
<div class="a s" style="left:870px;top:197px">Assembly-UnityScript - Assets\NewBehaviourScript.js - MonoDevelop-Unity</div>
<!-- client -->
<div class="a" style="left:847px;top:217px;width:840px;height:773px;background:#3a3a3a"></div><div class="a" style="left:848px;top:218px;width:840px;height:771px;background:#d4d4d4"></div>
<div class="a" style="left:849px;top:219px;width:840px;height:769px;background:#fff"></div>
<!-- menu -->
<div class="a s" style="left:849px;top:219px;width:840px;height:21px;background:linear-gradient(#fff 0,#f4f6fb 38%,#dae0f0 44%,#e2e7f4 100%);border-bottom:1px solid #c4c8d4">
<span class="mi" style="left:8px"><u>F</u>ile</span><span class="mi" style="left:41px"><u>E</u>dit</span><span class="mi" style="left:74px"><u>V</u>iew</span><span class="mi" style="left:113px"><u>S</u>earch</span><span class="mi" style="left:162px"><u>P</u>roject</span><span class="mi" style="left:213px"><u>B</u>uild</span><span class="mi" style="left:254px"><u>R</u>un</span><span class="mi" style="left:289px">Versio<u>n</u> Control</span><span class="mi" style="left:385px"><u>T</u>ools</span><span class="mi" style="left:428px"><u>W</u>indow</span><span class="mi" style="left:486px"><u>H</u>elp</span>
</div>
<!-- toolbar -->
<div class="a" style="left:849px;top:240px;width:840px;height:29px;background:linear-gradient(#f4f6fb 0,#e9edf7 45%,#d9dff0 52%,#dde3f1 100%);border-bottom:1px solid #a4a8b0"></div>
<div class="a" style="left:853px;top:244px;width:2px;height:22px;background:repeating-linear-gradient(#a8b0c4 0,#a8b0c4 2px,transparent 2px,transparent 4px)"></div><div class="a" style="left:1150px;top:244px;width:2px;height:22px;background:repeating-linear-gradient(#a8b0c4 0,#a8b0c4 2px,transparent 2px,transparent 4px)"></div><div class="a" style="left:1355px;top:244px;width:2px;height:22px;background:repeating-linear-gradient(#a8b0c4 0,#a8b0c4 2px,transparent 2px,transparent 4px)"></div><div class="a" style="left:968px;top:246px;width:1px;height:18px;background:#a8a8a8"></div><div class="a" style="left:1032px;top:246px;width:1px;height:18px;background:#a8a8a8"></div><div class="a" style="left:1238px;top:246px;width:1px;height:18px;background:#a8a8a8"></div><div class="a" style="left:1501px;top:246px;width:1px;height:18px;background:#a8a8a8"></div><svg class="ti" style="left:863px" width="16" height="16" viewBox="0 0 16 16"><defs><pattern id="ht" width="2" height="2" patternUnits="userSpaceOnUse"><rect width="1" height="1" fill="#444"/><rect x="1" y="1" width="1" height="1" fill="#444"/></pattern><pattern id="htg" width="2" height="2" patternUnits="userSpaceOnUse"><rect width="1" height="1" fill="#5a9a3a"/><rect x="1" y="1" width="1" height="1" fill="#5a9a3a"/></pattern></defs><path d="M3 1.5 H10 L13 4.5 V14.5 H3 Z" fill="#fcfcf8" stroke="#b4b4a8"/><path d="M10 1.5 V4.5 H13" fill="none" stroke="#b4b4a8"/></svg><svg class="ti" style="left:889px" width="16" height="16" viewBox="0 0 16 16"><path d="M1.5 3.5 H6 L7.5 5.5 H13.5 V13.5 H1.5 Z" fill="#d4d8a4" stroke="#a0a478"/><path d="M2.5 8.5 H14.5 L13.5 13.5 H1.5 Z" fill="#e0e4b8" stroke="#a0a478"/></svg><svg class="ti" style="left:915px" width="16" height="16" viewBox="0 0 16 16"><rect x="1.5" y="2" width="13" height="12.5" rx="1.5" fill="url(#ht)"/><rect x="2.5" y="2" width="11" height="2" fill="#c04040" opacity=".8"/><rect x="4" y="5" width="8" height="5" fill="#ccc" opacity=".6"/></svg><svg class="ti" style="left:942px" width="16" height="16" viewBox="0 0 16 16"><path d="M1 5 L5 1 H15 V11 L11 15 H1 Z" fill="url(#ht)"/><path d="M1 5 H11 V15 M11 5 L15 1" stroke="#555" stroke-width=".8" fill="none"/><rect x="2.6" y="7" width="7" height="6.4" fill="#e4e4e4" opacity=".85"/></svg><svg class="ti" style="left:979px" width="16" height="16" viewBox="0 0 16 16"><path d="M2 7 L8 2 V5 C13 5 15 8 14 13 C13 10 11 9 8 9.4 V12 Z" fill="#f4d020" stroke="#c8a010" stroke-width=".8"/></svg><svg class="ti" style="left:1005px" width="16" height="16" viewBox="0 0 16 16"><path d="M14 7 L8 2 V5 C3 5 1 8 2 13 C3 10 5 9 8 9.4 V12 Z" fill="url(#htg)"/></svg><svg class="ti" style="left:1043px" width="16" height="16" viewBox="0 0 16 16"><path d="M5 1 L9 9 M11 1 L7 9" stroke="#c8c0b0" stroke-width="1.6"/><circle cx="4.6" cy="11.6" r="2.6" fill="none" stroke="#c88a28" stroke-width="2"/><circle cx="11.4" cy="11.6" r="2.6" fill="none" stroke="#c88a28" stroke-width="2"/></svg><svg class="ti" style="left:1069px" width="16" height="16" viewBox="0 0 16 16"><rect x="2.5" y="2.5" width="8" height="9" fill="#f4f4f4" stroke="#c4c4c4"/><rect x="5.5" y="5.5" width="8" height="9" fill="#fafafa" stroke="#c4c4c4"/><path d="M7 8.5 H12 M7 10.5 H12" stroke="#ddd"/></svg><svg class="ti" style="left:1095px" width="16" height="16" viewBox="0 0 16 16"><rect x="2.5" y="2.5" width="11" height="12" rx="1" fill="#d89a38" stroke="#8a5a18"/><rect x="4.5" y="4.5" width="7" height="9" fill="#f4f0e4"/><rect x="5.5" y="1" width="5" height="3" fill="#888" stroke="#555" stroke-width=".6"/></svg><svg class="ti" style="left:1121px" width="16" height="16" viewBox="0 0 16 16"><path d="M3 5 H13 L12 14.5 H4 Z" fill="#6a6a6a" stroke="#333"/><ellipse cx="8" cy="4.6" rx="5.6" ry="2.4" fill="#8a8a8a" stroke="#333"/><ellipse cx="8" cy="4.4" rx="3.4" ry="1.2" fill="#444"/></svg><svg class="ti" style="left:1159px" width="16" height="16" viewBox="0 0 16 16"><circle cx="6.4" cy="6.4" r="4.4" fill="#e4ecf4" stroke="#a0a0a0" stroke-width="1.4"/><path d="M9.8 9.8 L14 14" stroke="#888" stroke-width="2.4" stroke-linecap="round"/></svg><svg class="ti" style="left:1185px" width="16" height="16" viewBox="0 0 16 16"><rect x="1" y="6" width="6" height="9" rx="1.5" fill="#333"/><rect x="9" y="6" width="6" height="9" rx="1.5" fill="#333"/><rect x="2.4" y="1.6" width="3.6" height="5" fill="#444"/><rect x="10" y="1.6" width="3.6" height="5" fill="#444"/><rect x="6.4" y="5" width="3.2" height="4" fill="#555"/><path d="M8 9 L11 12 L8 15 L7 12 Z" fill="#e89a20"/></svg><svg class="ti" style="left:1211px" width="16" height="16" viewBox="0 0 16 16"><rect x="2.5" y="3.5" width="10" height="10" fill="#f4f4f4" stroke="#b8b8b8"/><path d="M5 12 L12 4.6 L13.6 6.2 L6.6 13.4 L4.6 13.8 Z" fill="#e8a060" stroke="#c07838" stroke-width=".6"/><circle cx="5.4" cy="5.6" r="2.4" fill="none" stroke="#999" stroke-width="1.2"/></svg><svg class="ti" style="left:1249px" width="16" height="16" viewBox="0 0 16 16"><rect x="3.5" y="1.5" width="9" height="13" fill="#fcf8ec" stroke="#b0a890"/><path d="M5 1.5 H9.4 V9 L7.2 7 L5 9 Z" fill="#e8a828" stroke="#b87818" stroke-width=".6"/><rect x="8.4" y="9.4" width="5" height="5" fill="#fff" stroke="#666" stroke-width=".8"/><path d="M9.4 11.8 L10.6 13 L12.6 10.4" fill="none" stroke="#333" stroke-width=".9"/></svg><svg class="ti" style="left:1276px" width="16" height="16" viewBox="0 0 16 16"><rect x="3.5" y="1.5" width="9" height="13" fill="#fcf8ec" stroke="#b0a890"/><path d="M5 1.5 H9.4 V9 L7.2 7 L5 9 Z" fill="#e8a828" stroke="#b87818" stroke-width=".6"/><path d="M0.6 11 L5 7.4 V9.6 H8 V12.4 H5 V14.6 Z" fill="#3a78c8" stroke="#1a4888" stroke-width=".6"/></svg><svg class="ti" style="left:1302px" width="16" height="16" viewBox="0 0 16 16"><rect x="3.5" y="1.5" width="9" height="13" fill="#fcf8ec" stroke="#b0a890"/><path d="M5 1.5 H9.4 V9 L7.2 7 L5 9 Z" fill="#e8a828" stroke="#b87818" stroke-width=".6"/><path d="M15.4 11 L11 7.4 V9.6 H8 V12.4 H11 V14.6 Z" fill="#3a78c8" stroke="#1a4888" stroke-width=".6"/></svg><svg class="ti" style="left:1328px" width="16" height="16" viewBox="0 0 16 16"><rect x="2.5" y="1.5" width="11" height="13" fill="#fcf8ec" stroke="#5a3030" stroke-width="1.2"/><path d="M4.4 2 H11.6 V12 L8 9.4 L4.4 12 Z" fill="#c82838"/><path d="M6.4 4.4 L9.6 7.6 M9.6 4.4 L6.4 7.6" stroke="#fff" stroke-width="1.2"/></svg><svg class="ti" style="left:1533px" width="16" height="16" viewBox="0 0 16 16"><rect x="5" y="4" width="6" height="4" fill="#e85a2a" stroke="#8a3a10" stroke-width=".7"/><rect x="2" y="8" width="6" height="4" fill="#e8c83a" stroke="#8a7a10" stroke-width=".7"/><rect x="8" y="8" width="6" height="4" fill="#e85a2a" stroke="#8a3a10" stroke-width=".7"/><rect x="0.6" y="12" width="5" height="3.4" fill="#c858a8" stroke="#7a2a68" stroke-width=".7"/><rect x="5.6" y="12" width="5" height="3.4" fill="#e8c83a" stroke="#8a7a10" stroke-width=".7"/><rect x="10.6" y="12" width="5" height="3.4" fill="#4a8ae8" stroke="#1a4a98" stroke-width=".7"/><path d="M5.6 0.4 V3.4 M4 1.8 H7.2" stroke="#2a8a2a" stroke-width="1.2"/></svg><svg class="ti" style="left:1559px" width="16" height="16" viewBox="0 0 16 16"><rect x="5" y="4" width="6" height="4" fill="#e85a2a" stroke="#8a3a10" stroke-width=".7"/><rect x="2" y="8" width="6" height="4" fill="#e8c83a" stroke="#8a7a10" stroke-width=".7"/><rect x="8" y="8" width="6" height="4" fill="#e85a2a" stroke="#8a3a10" stroke-width=".7"/><rect x="0.6" y="12" width="5" height="3.4" fill="#c858a8" stroke="#7a2a68" stroke-width=".7"/><rect x="5.6" y="12" width="5" height="3.4" fill="#e8c83a" stroke="#8a7a10" stroke-width=".7"/><rect x="10.6" y="12" width="5" height="3.4" fill="#4a8ae8" stroke="#1a4a98" stroke-width=".7"/><path d="M3 0.4 L5 2.4 M5 0.4 L3 2.4 M7 0.4 L9 2.4 M9 0.4 L7 2.4 M11 0.4 L13 2.4 M13 0.4 L11 2.4" stroke="#2a8a2a" stroke-width="1"/></svg><svg class="ti" style="left:1585px" width="16" height="16" viewBox="0 0 16 16"><path d="M2 10 L9 3 L13 7 L6 14 Z" fill="url(#ht)" opacity=".55"/><path d="M9 3 L11 1.6 L14.4 5 L13 7 Z" fill="#bbb"/></svg><svg class="ti" style="left:1611px" width="16" height="16" viewBox="0 0 16 16"><path d="M1 8 L6 5 V11 Z" fill="#aaa"/><path d="M6 5 L13 2 V14 L6 11 Z" fill="#c4c4c4" stroke="#999" stroke-width=".7"/><rect x="13" y="4" width="2" height="8" fill="#999"/></svg>
<div class="a s" style="left:1371px;top:248px">Debug</div>
<div class="a" style="left:1507px;top:252px;border:4px solid transparent;border-top:5px solid #111;border-bottom:0"></div>
<!-- dock strip -->
<div class="a" style="left:849px;top:270px;width:21px;height:696px;background:#e2e2e2;border-right:1px solid #c4c4c4"></div>
<!-- tab strip -->
<div class="a" style="left:870px;top:270px;width:820px;height:26px;background:#d9d9d9;border-bottom:1px solid #8c8c8c"></div>
<div class="a" style="left:870px;top:270px;width:167px;height:30px;background:#fff;border-right:1px solid #8c8c8c;border-top:1px solid #b4b4b4"></div>
<div class="a" style="left:870px;top:296px;width:820px;height:4px;background:#fff"></div>
<svg class="a" style="left:876px;top:275px" width="17" height="16" viewBox="0 0 17 16"><rect x="1.5" y="1.5" width="12" height="13" fill="#fafafa" stroke="#8a8a8a"/><path d="M3.6 4.5 H11 M3.6 6.5 H11 M3.6 8.5 H9 M3.6 10.5 H8" stroke="#b8b8b8"/><circle cx="12" cy="11.6" r="4" fill="#6a9ad8" stroke="#3a5a98" stroke-width=".7"/><path d="M9.6 10 Q12 8.6 14.4 10.4 M9 12.4 Q12 14.4 15 12" stroke="#e4f0ff" stroke-width="1" fill="none"/></svg>
<div class="a s" style="left:896px;top:277px;letter-spacing:-.12px">NewBehaviourScript.js</div>
<svg class="a" style="left:1018px;top:280px" width="9" height="9" viewBox="0 0 9 9"><path d="M1.4 1.4 L7.6 7.6 M7.6 1.4 L1.4 7.6" stroke="#666" stroke-width="2"/></svg>
<!-- breadcrumb -->
<div class="a" style="left:874px;top:300px;width:820px;height:20px;background:linear-gradient(#f6f6f6,#e6e6e6 50%,#d6d6d6);border-bottom:1px solid #a8a8a8"></div>
<svg class="a" style="left:876px;top:302px" width="17" height="17" viewBox="0 0 17 17"><path d="M4.6 0.8 L8.6 4.8 L4.6 8.8 L0.6 4.8 Z" fill="#f0dc28" stroke="#8a7a10" stroke-width=".8"/><path d="M12.6 2.6 L15.6 5.6 L12.6 8.6 L9.6 5.6 Z" fill="#c878c8" stroke="#7a3a7a" stroke-width=".8"/><path d="M10.6 9 L14 12.4 L10.6 15.8 L7.2 12.4 Z" fill="#5a9ae0" stroke="#2a5a9a" stroke-width=".8"/><path d="M5 9 L10 12 M9 5 L12 5.6" stroke="#666" stroke-width=".7"/></svg>
<div class="a s" style="left:894px;top:303px;letter-spacing:-.15px">NewBehaviourScript</div>
<div class="a" style="left:1004px;top:305px;border:4px solid transparent;border-left:5px solid #111;border-right:0"></div>
<svg class="a" style="left:1015px;top:303px" width="11" height="11" viewBox="0 0 11 11"><path d="M5.5 0.8 L10.2 5.5 L5.5 10.2 L0.8 5.5 Z" fill="#c878c8" stroke="#7a3a7a" stroke-width=".9"/></svg>
<div class="a s" style="left:1029px;top:303px">DeltaPosition()</div>
<!-- dock labels -->
<svg class="a" style="left:851px;top:280px" width="16" height="16" viewBox="0 0 16 16"><rect x=".5" y="1.5" width="15" height="13" fill="#f4f4f4" stroke="#9a9a9a"/><rect x=".5" y="1.5" width="15" height="3" fill="#b878c0"/><rect x="1" y="5" width="3.4" height="9" fill="#dcdcdc"/><path d="M7 7.5 H12 M7 9.5 H11" stroke="#c8c8c8"/></svg>
<div class="a" style="left:851px;top:298px;width:16px;height:50px"><div class="s" style="position:absolute;left:8px;top:0;transform-origin:0 0;transform:rotate(90deg) translate(0,-50%);color:#5a5a5a;letter-spacing:.1px;margin-top:0">Solution</div></div>
<svg class="a" style="left:851px;top:353px" width="17" height="17" viewBox="0 0 17 17"><path d="M4.6 0.8 L8.6 4.8 L4.6 8.8 L0.6 4.8 Z" fill="#f0dc28" stroke="#8a7a10" stroke-width=".8"/><path d="M12.6 2.6 L15.6 5.6 L12.6 8.6 L9.6 5.6 Z" fill="#c878c8" stroke="#7a3a7a" stroke-width=".8"/><path d="M10.6 9 L14 12.4 L10.6 15.8 L7.2 12.4 Z" fill="#5a9ae0" stroke="#2a5a9a" stroke-width=".8"/></svg>
<div class="a" style="left:851px;top:372px;width:16px;height:50px"><div class="s" style="position:absolute;left:8px;top:0;transform-origin:0 0;transform:rotate(90deg) translate(0,-50%);color:#5a5a5a;letter-spacing:.1px">Classes</div></div>
<svg class="a" style="left:852px;top:421px" width="14" height="14" viewBox="0 0 14 14"><rect x=".5" y=".5" width="13" height="13" fill="#2a6a2a" stroke="#222"/><path d="M2 7.6 H5 L6 4 L7.6 10 L8.6 6.4 H12" fill="none" stroke="#8af08a" stroke-width="1.1"/></svg>
<div class="a" style="left:851px;top:438px;width:16px;height:60px"><div class="s" style="position:absolute;left:8px;top:0;transform-origin:0 0;transform:rotate(90deg) translate(0,-50%);color:#5a5a5a;letter-spacing:.1px">Unit Tests</div></div>
<!-- editor -->
<div class="a" style="left:874px;top:320px;width:820px;height:646px;background:#fff;border-left:1px solid #a8a8a8"></div>
<div class="a" style="left:875px;top:320px;width:18px;height:646px;background:#efefef;border-right:1px solid #d8d8d8"></div>
<div class="a" style="left:930px;top:320px;width:1px;height:646px;background:#c4c4c4"></div>
<div class="ln" style="top:320px">1
2
3
4
5
6
7
8
9
10
11
12
13
14
15
16
17
18
19
20
21
22
23
24
25
26
27
28</div>
<div class="gb" style="top:336px;height:80px"></div>
<div class="gb" style="top:640px;height:16px"></div>
<div class="gb" style="top:672px;height:32px"></div>
<div class="a" style="left:922px;top:428px;width:1px;height:28px;background:#b4b4b4"></div><div class="a" style="left:922px;top:455px;width:5px;height:1px;background:#b4b4b4"></div>
<div class="a" style="left:922px;top:492px;width:1px;height:92px;background:#b4b4b4"></div><div class="a" style="left:922px;top:583px;width:5px;height:1px;background:#b4b4b4"></div>
<div class="a" style="left:922px;top:620px;width:1px;height:124px;background:#b4b4b4"></div>
<div class="fold" style="top:419px"></div><div class="fold" style="top:483px"></div><div class="fold" style="top:611px"></div>
<div class="a m" style="left:935px;top:321px"><span class="pp">#pragma strict</span>
<span class="kw">var</span> target : <span class="ty">Transform</span>;
<span class="kw">var</span> firstPosition : <span class="ty">Vector3</span>;
<span class="kw">var</span> secondPosition : <span class="ty">Vector3</span>;
<span class="kw">var</span> deltaPosition : <span class="ty">Vector3</span>;

<span class="kw">function</span> Start () {

}

<span class="kw">function</span> Update () {

target.Translate(<span class="nm">0.1</span>, -<span class="nm">0.2</span>, <span class="nm">0</span>);

DeltaPosition () ;

}

<span class="kw">function</span> DeltaPosition () <span style="background:#e8e8e0;outline:1px solid #c0c0b8">{</span>

firstPosition = target.position;
<span class="kw">yield</span>;
secondPosition = target.position;
deltaPosition = secondPosition - firstPosition;

<span class="ty">Debug</span>.Log(deltaPosition);

}</div>
<!-- status -->
<div class="a s" style="left:849px;top:966px;width:840px;height:22px;background:linear-gradient(#f4f4f4,#e8e8e8);border-top:1px solid #a8a8a8"><span class="a" style="left:5px;top:4px">Ready</span></div>
</div>

<!-- ===== Taskbar ===== -->
<div id="taskbar" class="a" style="left:0;top:1010px;width:1680px;height:40px;background:linear-gradient(90deg,#1a1c1e 0,#1e2022 20%,#1a1c1e 50%,#222a32 58.5%,#2c3640 61%,#3c4852 65.5%,#56626c 71%,#65717b 74%,#737f89 77%,#566068 80.5%,#3c4248 82.5%,#54585c 85.5%,#3a3e42 88%,#222426 90.5%,#1a1c1e 96%,#141618 100%);overflow:hidden">
<div class="a" style="left:1005px;top:2px;width:75px;height:16px;background:#5c6a78;filter:blur(7px);opacity:.75"></div>
<div class="a" style="left:985px;top:24px;width:270px;height:22px;background:#1c2228;filter:blur(7px);opacity:.85;transform:rotate(3deg)"></div>
<div class="a" style="left:1120px;top:16px;width:120px;height:9px;background:#242a30;filter:blur(5px);opacity:.7;transform:rotate(8deg)"></div>
<div class="a" style="left:1262px;top:4px;width:70px;height:30px;background:#8c98a2;filter:blur(9px);opacity:.6"></div>
<div class="a" style="left:1335px;top:0;width:75px;height:14px;background:#1e2226;filter:blur(6px);opacity:.8;transform:rotate(6deg)"></div>
<div class="a" style="left:1290px;top:30px;width:180px;height:14px;background:#2a2e32;filter:blur(7px);opacity:.7"></div>
<div class="a" style="left:0;top:0;width:1680px;height:1px;background:#0c0c0c"></div>
<div class="a" style="left:0;top:1px;width:1680px;height:1px;background:rgba(255,255,255,.28)"></div>
<div class="a" style="left:0;top:2px;width:1680px;height:18px;background:linear-gradient(rgba(255,255,255,.10),rgba(255,255,255,.02))"></div>
<!-- start orb -->
<svg class="a" style="left:7px;top:0px" width="40" height="40" viewBox="0 0 44 44"><defs><radialGradient id="orb" cx=".5" cy=".3" r=".8"><stop offset="0" stop-color="#8ac4f0"/><stop offset=".45" stop-color="#2a78c8"/><stop offset="1" stop-color="#0a2a68"/></radialGradient></defs><circle cx="22" cy="22" r="20" fill="url(#orb)" stroke="#9ac8f0" stroke-opacity=".7" stroke-width="1.2"/><ellipse cx="22" cy="12" rx="15" ry="9" fill="#fff" opacity=".22"/><path d="M11 14 Q16 11.6 20.6 14 L19.4 21.4 Q15 19.6 9.8 21.6 Z" fill="#e8542a"/><path d="M22.6 14.6 Q27 17 32.6 14.4 L31.4 21.8 Q26 24 21.4 21.8 Z" fill="#7ac038"/><path d="M9.4 23.6 Q14.6 21.6 19 23.6 L17.8 31 Q13 29 8.2 31 Z" fill="#3a8ae0"/><path d="M21 24 Q26 26.2 31 23.8 L29.8 31.2 Q25 33.4 19.8 31.2 Z" fill="#f4c428"/></svg>
<!-- app buttons -->
<div class="tbtn" style="left:246px;"></div><div class="tbtn" style="left:556px;"></div><div class="tbtn" style="left:618px;"></div><div class="tbtn" style="left:680px;"></div><div class="tbtn" style="left:742px;background:linear-gradient(135deg,rgba(255,255,255,.92) 0,rgba(255,255,255,.62) 40%,rgba(255,255,255,.48) 52%,rgba(255,255,255,.6) 100%)"></div><div class="tbtn" style="left:866px;"></div><div class="tbtn" style="left:928px;"></div>
<!-- 3ds-like -->
<svg class="tico" style="left:76px" width="26" height="32" viewBox="0 0 26 32"><rect x="0" y="0" width="26" height="32" rx="2" fill="#2c3238"/><rect x="0" y="0" width="26" height="32" rx="2" fill="none" stroke="#4a5058"/><path d="M19 9 Q13 5 7.4 8.6 Q3 12.6 5.6 18 Q9 23.6 16 22.4 Q22 20 20 14.6 Q17 10.6 12.6 12.6 Q9.6 15 12 17.6 Q15 18.6 15.6 16" fill="none" stroke="#fff" stroke-width="2.2" stroke-linecap="round"/></svg>
<!-- WoT -->
<svg class="tico" style="left:139px;top:5px" width="22" height="30" viewBox="0 0 26 34"><path d="M3 1 H23 L25 4 V22 L13 33 L1 22 V4 Z" fill="#3a3a3a" stroke="#c8c8c8" stroke-width="1.6"/><path d="M5 7 H21 V10 H19 V21 L13 27 L7 21 V10 H5 Z" fill="#d8d8d8"/><path d="M10.4 10 H15.6 V22 L13 24.6 L10.4 22 Z" fill="#3a3a3a"/><path d="M12.2 10 H13.8 V22 H12.2 Z" fill="#d8d8d8"/></svg>
<!-- snipping -->
<svg class="tico" style="left:196px;top:3px" width="34" height="34" viewBox="0 0 34 34"><ellipse cx="17" cy="13" rx="13" ry="9.6" fill="#f4f0f0" stroke="#c82828" stroke-width="1.6"/><ellipse cx="14" cy="22" rx="10" ry="5" fill="#b04040" opacity=".55"/><path d="M9 5 L24 25 M20 6 L13 24" stroke="#c8c8c8" stroke-width="2.4"/><circle cx="26" cy="28" r="3.4" fill="none" stroke="#2a8ad8" stroke-width="2.4"/><circle cx="12" cy="28.4" r="3.4" fill="none" stroke="#2a8ad8" stroke-width="2.4"/></svg>
<!-- paint -->
<svg class="tico" style="left:256px;top:2px" width="38" height="36" viewBox="0 0 38 36"><path d="M4 22 Q2 12 12 9 Q24 6 29 13 Q32 19 26 21 Q22 23 24 27 Q25 32 17 32 Q6 31 4 22 Z" fill="#e8e4d8" stroke="#8a8678" stroke-width="1"/><circle cx="10" cy="18" r="2.4" fill="#e8502a"/><circle cx="15" cy="13.4" r="2.4" fill="#58b838"/><circle cx="21.6" cy="12.6" r="2.4" fill="#e8c028"/><circle cx="10.6" cy="24.6" r="2.4" fill="#3a7ad8"/><path d="M33 2 L36 4 L22 30 L19 33 L19.6 28.6 Z" fill="#d88a38" stroke="#8a5018" stroke-width=".8"/><path d="M33 2 L36 4 L33 9.6 L30 7.6 Z" fill="#e8b878"/></svg>
<!-- calculator -->
<svg class="tico" style="left:323px;top:3px" width="26" height="34" viewBox="0 0 26 34"><rect x="1" y="1" width="24" height="32" rx="2.4" fill="#9ac4ec" stroke="#4a84c0" stroke-width="1.2"/><rect x="4" y="4" width="18" height="8" fill="#e8f4fc" stroke="#5a94c8" stroke-width=".8"/><text x="15" y="11" font-family="Liberation Mono" font-size="8" fill="#446">0</text><g fill="#f4f8fc" stroke="#5a94c8" stroke-width=".5"><rect x="4" y="15" width="4" height="3.4"/><rect x="9.4" y="15" width="4" height="3.4"/><rect x="14.8" y="15" width="4" height="3.4"/><rect x="4" y="20" width="4" height="3.4"/><rect x="9.4" y="20" width="4" height="3.4"/><rect x="14.8" y="20" width="4" height="3.4"/><rect x="4" y="25" width="4" height="3.4"/><rect x="9.4" y="25" width="4" height="3.4"/><rect x="14.8" y="25" width="4" height="3.4"/></g><rect x="20" y="20" width="3" height="10" fill="#e8a838"/></svg>
<!-- movie maker -->
<svg class="tico" style="left:383px;top:3px" width="32" height="34" viewBox="0 0 32 34"><path d="M1 8 L25 1 L27 6 L3 13 Z" fill="#222"/><path d="M5 7.4 L8 11 M11 5.8 L14 9.4 M17 4 L20 7.6 M23 2.4 L25.6 5.8" stroke="#f4f4f4" stroke-width="2.2"/><rect x="3" y="12" width="24" height="20" fill="#3a7ad0" stroke="#1a3a78"/><rect x="5" y="14" width="20" height="16" fill="#e8c848"/><path d="M5 30 L12 20 L17 25 L21 21 L25 30 Z" fill="#58a848"/><circle cx="24" cy="27" r="5.6" fill="#5a9ae0" stroke="#2a5a9a"/><circle cx="24" cy="27" r="1.6" fill="#e8e8f0"/></svg>
<!-- transfer -->
<svg class="tico" style="left:445px;top:3px" width="32" height="34" viewBox="0 0 32 34"><path d="M2 4 L8 1 H20 L16 4 Z" fill="#8ac0f0"/><rect x="2" y="4" width="14" height="27" fill="#4a94e0" stroke="#2a64a8"/><path d="M16 4 L20 1 V28 L16 31 Z" fill="#2a6ab8"/><path d="M14 8 H24 V4 L31 11 L24 18 V14 H14 Z" fill="#48c038" stroke="#1a7a18" stroke-width=".8"/><path d="M22 22 H12 V18 L5 25 L12 32 V28 H22 Z" fill="#48c038" stroke="#1a7a18" stroke-width=".8"/><text x="20" y="33" font-family="Liberation Sans" font-weight="bold" font-style="italic" font-size="15" fill="#f4f4f4" stroke="#555" stroke-width=".6">7</text></svg>
<!-- hitman -->
<svg class="tico" style="left:506px;top:4px" width="32" height="32" viewBox="0 0 32 32"><rect width="32" height="32" fill="#000"/><path d="M16 3 L18 12 L28 8 L21 15 L30 18 L20 19 L23 28 L16 21 L9 28 L12 19 L2 18 L11 15 L4 8 L14 12 Z" fill="#8a6a24"/><path d="M16 9 L17.4 14.6 L22 16 L17.4 17.6 L16 24 L14.6 17.6 L10 16 L14.6 14.6 Z" fill="#1a1208"/></svg>
<!-- skype -->
<svg class="tico" style="left:569px;top:3px" width="32" height="34" viewBox="0 0 32 34"><circle cx="10" cy="10" r="8.6" fill="#18a8e8"/><circle cx="22" cy="24" r="8.6" fill="#18a8e8"/><circle cx="16" cy="17" r="13" fill="#18a8e8"/><text x="8.6" y="26" font-family="Liberation Sans" font-weight="bold" font-size="25" fill="#fff">S</text></svg>
<!-- chrome -->
<svg class="tico" style="left:631px;top:4px" width="32" height="32" viewBox="0 0 32 32"><circle cx="16" cy="16" r="15" fill="#e8c428"/><path d="M16 16 L3 8.6 A15 15 0 0 1 29 8.6 Z" fill="#d83a2a"/><path d="M16 16 L3 8.6 A15 15 0 0 0 16 31 L22.6 19.8 Z" fill="#38a048"/><path d="M16 16 L29 8.6 H16 Z" fill="#d83a2a"/><circle cx="16" cy="16" r="7" fill="#f4f4f4"/><circle cx="16" cy="16" r="5.6" fill="#3a7ad8"/></svg>
<!-- unity -->
<svg class="tico" style="left:692px;top:3px" width="34" height="34" viewBox="0 0 34 34"><path d="M1.9 16.3 L16 4.6 L28.6 1.5 L32.4 17 L29 32.3 L16 28.5 Z" fill="#2c2c2c" stroke="#f0f0f0" stroke-width="1" stroke-linejoin="round"/><path d="M9.9 14.4 L22.5 6 L19.4 14.7 Z" fill="#fafafa"/><path d="M9.9 18.6 L19.4 18.6 L22.5 27 Z" fill="#f0f0f0"/><path d="M25.5 9.1 L29.7 16.7 L25.5 25.5 L22.1 17.1 Z" fill="#f6f6f6"/></svg>
<!-- monodevelop -->
<svg class="tico" style="left:754px;top:4px" width="34" height="32" viewBox="0 0 34 32"><path d="M2 6 Q8 0 14 5 Q20 1 31 3 L30 22 Q22 28 15 25 Q8 30 3 26 Z" fill="#6a8ec4" stroke="#3a5a94" stroke-width="1"/><circle cx="13" cy="15" r="7" fill="none" stroke="#d4e2f6" stroke-width="2.6"/><path d="M13 15 Q13 11 17 11.6" fill="none" stroke="#d4e2f6" stroke-width="2"/><path d="M17.6 24.4 L24 19.6 L30.4 18 L31.6 25 L30.4 31.6 L24 29.6 Z" fill="#1c1c1c"/><path d="M21 23.6 L26.6 20.4 L25.4 23.8 Z M21 25.4 L25.4 25.4 L26.6 29 Z M28 21.6 L30 24.6 L28 28.4 L26.6 24.6 Z" fill="#fafafa"/></svg>
<!-- photoshop -->
<svg class="tico" style="left:816px;top:4px" width="32" height="32" viewBox="0 0 32 32"><rect x=".6" y=".6" width="30.8" height="30.8" fill="#0a5aa8" stroke="#4a9ae8" stroke-width="1.2"/><rect x="2" y="2" width="28" height="13" fill="#2a7ac8" opacity=".5"/><text x="5" y="22" font-family="Liberation Sans" font-weight="bold" font-size="15" fill="#8ac8ff">Ps</text></svg>
<!-- avea -->
<svg class="tico" style="left:879px;top:3px" width="32" height="34" viewBox="0 0 32 34"><rect width="32" height="34" fill="#d4202c"/><path d="M5 12 Q16 2 27 12 M8.6 15.6 Q16 9 23.4 15.6 M12 19 Q16 15.6 20 19" fill="none" stroke="#fff" stroke-width="2.2" stroke-linecap="round"/><circle cx="16" cy="22" r="1.6" fill="#fff"/><text x="7.6" y="31" font-family="Liberation Sans" font-size="8.4" fill="#fff">avea</text></svg>
<!-- wmp -->
<svg class="tico" style="left:942px;top:4px" width="30" height="32" viewBox="0 0 30 32"><rect x="10" y="3" width="18" height="24" fill="#78b4e8" stroke="#3a74b0"/><rect x="7" y="5" width="18" height="24" fill="#8ac0f0" stroke="#3a74b0"/><rect x="3" y="7" width="19" height="24" fill="#a8d0f4" stroke="#3a74b0"/><circle cx="12" cy="16" r="9.6" fill="#f08a1a" stroke="#fff" stroke-width="1.6"/><path d="M9 10.6 L18 16 L9 21.4 Z" fill="#fff"/></svg>
<!-- tray -->
<div class="a" style="left:1466px;top:10px;font:13px 'Liberation Sans',sans-serif;color:#fff;letter-spacing:-.2px">TR</div>
<div class="a" style="left:1497px;top:16px;border:4px solid transparent;border-bottom:5px solid #fff;border-top:0"></div>
<svg class="a" style="left:1518px;top:11px" width="18" height="18" viewBox="0 0 18 18"><path d="M2 1 V17" stroke="#fff" stroke-width="1.6"/><path d="M3.4 2 Q6 0.6 9 2.4 Q12 4 14.4 2.6 V9.6 Q12 11 9 9.4 Q6 7.6 3.4 9 Z" fill="#f4f4f4"/><circle cx="12" cy="12.6" r="4.6" fill="#d82828" stroke="#fff" stroke-width=".6"/><path d="M10 10.6 L14 14.6 M14 10.6 L10 14.6" stroke="#fff" stroke-width="1.6"/></svg>
<svg class="a" style="left:1541px;top:11px" width="20" height="18" viewBox="0 0 20 18"><rect x="6" y="3.6" width="12" height="9" fill="#1c1e20" stroke="#fff" stroke-width="1.4"/><path d="M9 15.6 H15 M12 12.6 V15.6" stroke="#fff" stroke-width="1.4"/><path d="M3.4 1 V6 M1.4 2.6 H5.4 M1.6 6 H5.2 V10 H1.6 Z M3.4 10 V15.6 H8" fill="none" stroke="#fff" stroke-width="1.2"/></svg>
<svg class="a" style="left:1566px;top:11px" width="18" height="18" viewBox="0 0 18 18"><path d="M1 6.4 H3.6 L8 2 V16 L3.6 11.6 H1 Z" fill="#f4f4f4"/><path d="M10 6.4 Q11.6 9 10 11.6 M12 4.6 Q14.6 9 12 13.4 M14 3 Q17.4 9 14 15" fill="none" stroke="#f4f4f4" stroke-width="1.1"/></svg>
<div class="a" style="left:1590px;top:4px;width:74px;text-align:center;font:12px 'Liberation Sans',sans-serif;color:#fff;line-height:18px;letter-spacing:-.2px">12:59<br>16.11.2013</div>
<div class="a" style="left:1666px;top:1px;width:14px;height:39px;border-left:1px solid #4a4e54;background:linear-gradient(90deg,rgba(255,255,255,.18),rgba(255,255,255,.06))"></div>
</div>

</div>
</body>
</html>
